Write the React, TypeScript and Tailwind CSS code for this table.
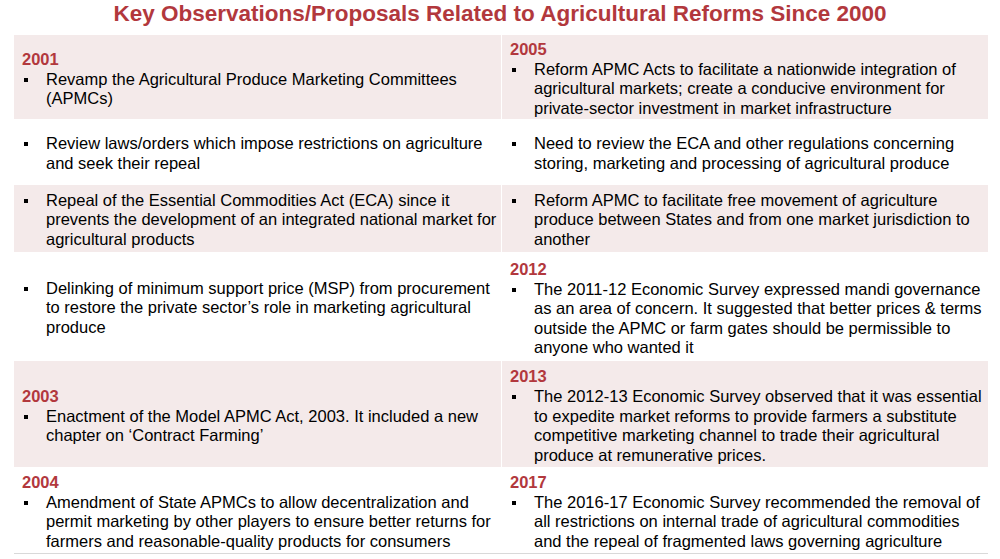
import React from "react";

type Cell = { year?: string; items: string[] };
type Row = { h: number; shaded: boolean; left: Cell; right: Cell };

const rows: Row[] = [
  {
    h: 84,
    shaded: true,
    left: { year: "2001", items: ["Revamp the Agricultural Produce Marketing Committees (APMCs)"] },
    right: {
      year: "2005",
      items: [
        "Reform APMC Acts to facilitate a nationwide integration of agricultural markets; create a conducive environment for private-sector investment in market infrastructure",
      ],
    },
  },
  {
    h: 66,
    shaded: false,
    left: { items: ["Review laws/orders which impose restrictions on agriculture and seek their repeal"] },
    right: {
      items: ["Need to review the ECA and other regulations concerning storing, marketing and processing of agricultural produce"],
    },
  },
  {
    h: 67,
    shaded: true,
    left: {
      items: [
        "Repeal of the Essential Commodities Act (ECA) since it prevents the development of an integrated national market for agricultural products",
      ],
    },
    right: {
      items: [
        "Reform APMC to facilitate free movement of agriculture produce between States and from one market jurisdiction to another",
      ],
    },
  },
  {
    h: 109,
    shaded: false,
    left: {
      items: [
        "Delinking of minimum support price (MSP) from procurement to restore the private sector\u2019s role in marketing agricultural produce",
      ],
    },
    right: {
      year: "2012",
      items: [
        "The 2011-12 Economic Survey expressed mandi governance as an area of concern. It suggested that better prices & terms outside the APMC or farm gates should be permissible to anyone who wanted it",
      ],
    },
  },
  {
    h: 106,
    shaded: true,
    left: {
      year: "2003",
      items: ["Enactment of the Model APMC Act, 2003. It included a new chapter on \u2018Contract Farming\u2019"],
    },
    right: {
      year: "2013",
      items: [
        "The 2012-13 Economic Survey observed that it was essential to expedite market reforms to provide farmers a substitute competitive marketing channel to trade their agricultural produce at remunerative prices.",
      ],
    },
  },
  {
    h: 86,
    shaded: false,
    left: {
      year: "2004",
      items: [
        "Amendment of State APMCs to allow decentralization and permit marketing by other players to ensure better returns for farmers and reasonable-quality products for consumers",
      ],
    },
    right: {
      year: "2017",
      items: [
        "The 2016-17 Economic Survey recommended the removal of all restrictions on internal trade of agricultural commodities and the repeal of fragmented laws governing agriculture",
      ],
    },
  },
];

function CellView({ cell, shaded, h }: { cell: Cell; shaded: boolean; h: number }) {
  return (
    <div
      className={`flex flex-col justify-center pl-2 pr-1 pt-[3px] ${shaded ? "bg-[#f4eaea]" : "bg-white"}`}
      style={{ height: h }}
    >
      {cell.year && (
        <div className="text-[16.5px] font-bold leading-[21px] text-[#b2383d]">{cell.year}</div>
      )}
      {cell.items.map((t, i) => (
        <div key={i} className="flex">
          <div className="w-[24px] shrink-0 pl-[2px]">
            <div className="mt-[8px] h-[4px] w-[4px] bg-black" />
          </div>
          <div className="text-[16.5px] leading-[19.5px] text-black">{t}</div>
        </div>
      ))}
    </div>
  );
}

export default function App() {
  return (
    <div
      className="h-[559px] w-[1000px] overflow-hidden bg-white"
      style={{ fontFamily: '"Liberation Sans", Arial, sans-serif' }}
    >
      <div className="flex h-[35px] justify-center">
        <h1 className="text-[22.5px] font-bold leading-[28px] text-[#b2383d]">
          Key Observations/Proposals Related to Agricultural Reforms Since 2000
        </h1>
      </div>
      <div className="ml-[14px] grid w-[974px] grid-cols-[487px_486px] gap-x-px border-b border-[#d9d9d9] bg-white">
        {rows.map((r, i) => (
          <React.Fragment key={i}>
            <CellView cell={r.left} shaded={r.shaded} h={r.h} />
            <CellView cell={r.right} shaded={r.shaded} h={r.h} />
          </React.Fragment>
        ))}
      </div>
    </div>
  );
}
